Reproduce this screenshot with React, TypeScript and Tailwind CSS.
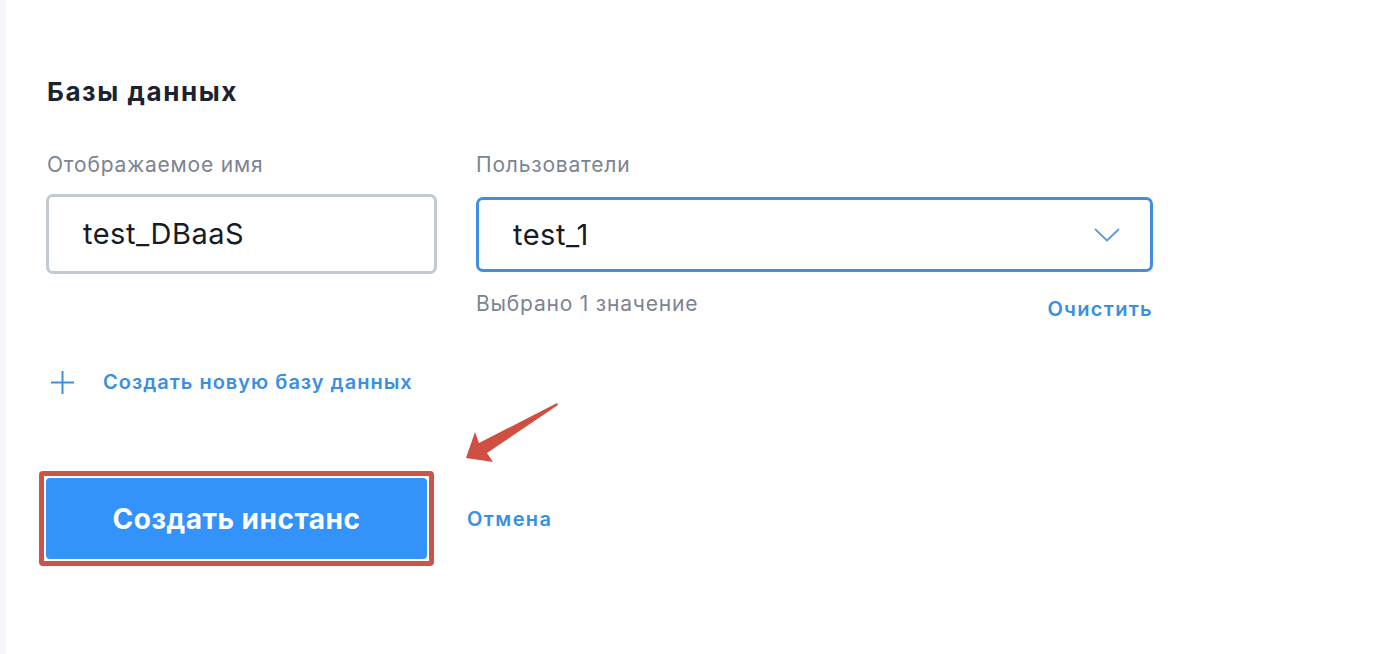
import React from 'react';

const font = { fontFamily: 'Inter, "Noto Sans", "Liberation Sans", sans-serif' };

const App: React.FC = () => {
  return (
    <div className="relative flex min-h-[654px] w-full bg-white" style={font}>
      <div className="w-[6px] shrink-0 bg-[#f5f7fa]" />

      <div className="flex flex-col pl-[41px] pt-[74px]">
        <h2 className="text-[26px] leading-[36px] font-bold tracking-[1.6px] text-[#1b2230]">Базы данных</h2>

        <div className="mt-[41px] flex gap-[39px]">
          <div className="flex w-[390px] flex-col">
            <label className="text-[21px] leading-[28px] tracking-[0.8px] text-[#7c8391]">Отображаемое имя</label>
            <div className="mt-[15px] -ml-[1px] flex h-[80px] items-center rounded-[7px] border-[3px] border-[#c1cad3] pl-[34px] text-[29px] tracking-[0.5px] text-[#161b26]">
              test_DBaaS
            </div>
          </div>

          <div className="flex w-[677px] flex-col">
            <label className="text-[21px] leading-[28px] tracking-[0.8px] text-[#7c8391]">Пользователи</label>
            <div className="mt-[18px] flex h-[75px] items-center justify-between rounded-[7px] border-[3px] border-[#3d8fe3] pl-[34px] pr-[30px] text-[29px] tracking-[0.5px] text-[#161b26]">
              <span>test_1</span>
              <svg width="26" height="14" viewBox="0 0 26 14" fill="none">
                <path d="M1.5 1.5 L13 12.5 L24.5 1.5" stroke="#5b9be0" strokeWidth="1.8" strokeLinecap="round" strokeLinejoin="round" />
              </svg>
            </div>
            <div className="mt-[18px] flex items-start justify-between">
              <span className="text-[21px] leading-[28px] tracking-[0.8px] text-[#7c8391]">Выбрано 1 значение</span>
              <button className="mt-[5px] text-[20px] leading-[28px] font-semibold tracking-[1.3px] text-[#3b8fe0]">Очистить</button>
            </div>
          </div>
        </div>

        <button className="mt-[45px] flex items-center gap-[28px] self-start pl-[3px] text-[20px] leading-[28px] font-semibold tracking-[1px] text-[#3b8fe0]">
          <svg width="25" height="25" viewBox="0 0 25 25" fill="none">
            <path d="M12.5 1 V24 M1 12.5 H24" stroke="#3b8fe0" strokeWidth="2" />
          </svg>
          Создать новую базу данных
        </button>

        <div className="mt-[75px] flex items-center gap-[33px] -ml-[8px]">
          <div className="rounded-[4px] border-[5px] border-[#cb5449] p-[2px]">
            <button className="flex h-[81px] w-[381px] items-center justify-center rounded-[4px] bg-[#3493fa] text-[28px] font-bold tracking-[0.5px] text-white">
              Создать инстанс
            </button>
          </div>
          <button className="text-[20px] font-semibold tracking-[1.4px] text-[#3b8fe0]">Отмена</button>
        </div>
      </div>

      <svg className="absolute left-[462px] top-[400px]" width="100" height="66" viewBox="0 0 100 66" fill="none">
        <path d="M95 3 L17 43 L13 32 L4 58 L31 62 L25 53 L96 5 Z" fill="#cf4f42" strokeLinejoin="round" />
      </svg>
    </div>
  );
};

export default App;
